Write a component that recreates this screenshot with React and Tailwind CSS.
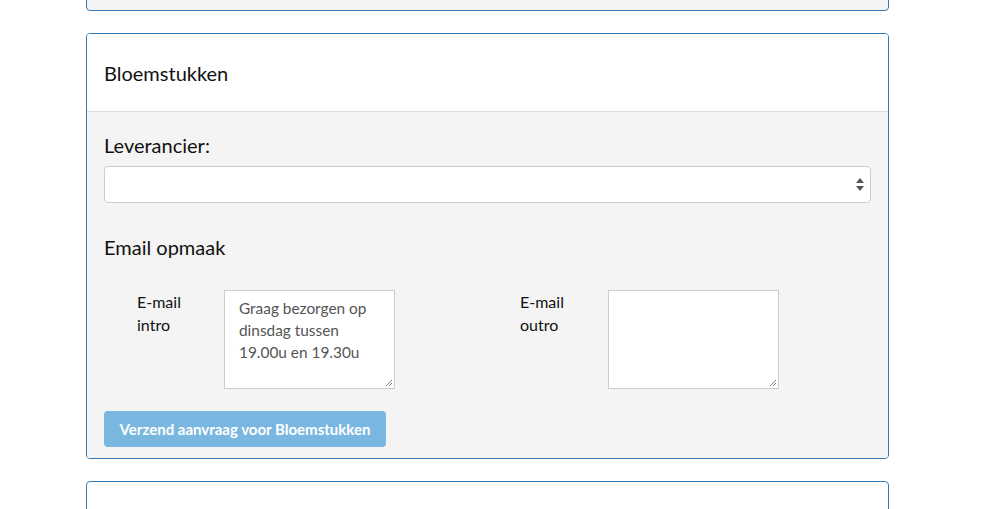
import React from "react";

export default function App() {
  return (
    <div className="w-[982px] h-[509px] overflow-hidden bg-white" style={{ fontFamily: "Lato, 'Open Sans', sans-serif" }}>
      <div className="ml-[86px] w-[803px] flex flex-col gap-[22px] -mt-[30px]">
        <div className="h-[41px] border border-[#337ab7] rounded-[4px] bg-[#f4f4f4]" />
        <div className="border border-[#337ab7] rounded-[4px] overflow-hidden">
          <div className="h-[78px] bg-white border-b border-[#dddddd] flex items-center px-[17px]">
            <h3 className="text-[20px] text-[#111] pt-[1px]">Bloemstukken</h3>
          </div>
          <div className="bg-[#f4f4f4] px-[17px] pt-[20px] pb-[11px]">
            <div className="text-[20px] text-[#111] leading-[26px]">Leverancier:</div>
            <div className="mt-[8px] relative h-[37px] bg-white border border-[#cccccc] rounded-[4px]">
              <svg className="absolute right-[6px] top-[11px]" width="8" height="13" viewBox="0 0 8 13">
                <path d="M4 0 L8 5 L0 5 Z" fill="#555" />
                <path d="M4 13 L8 8 L0 8 Z" fill="#555" />
              </svg>
            </div>
            <div className="mt-[31px] text-[20px] text-[#111] leading-[26px]">Email opmaak</div>
            <div className="mt-[30px] flex">
              <div className="w-[384px] flex pl-[33px]">
                <div className="w-[87px] text-[16px] leading-[23px] text-[#111]">E-mail<br />intro</div>
                <div className="w-[171px] h-[99px] bg-white border border-[#cccccc] px-[14px] py-[6px] text-[15.4px] leading-[22px] text-[#555] relative">
                  Graag bezorgen op dinsdag tussen 19.00u en 19.30u
                  <Grip />
                </div>
              </div>
              <div className="flex pl-[32px]">
                <div className="w-[88px] text-[16px] leading-[23px] text-[#111]">E-mail<br />outro</div>
                <div className="w-[171px] h-[99px] bg-white border border-[#cccccc] relative">
                  <Grip />
                </div>
              </div>
            </div>
            <div className="mt-[22px]">
              <button className="h-[36px] w-[282px] bg-[#7ab7e0] rounded-[4px] text-white font-bold text-[15px]">
                Verzend aanvraag voor Bloemstukken
              </button>
            </div>
          </div>
        </div>
        <div className="h-[60px] border border-[#337ab7] rounded-[4px] bg-white" />
      </div>
    </div>
  );
}

function Grip() {
  return (
    <svg className="absolute right-[1px] bottom-[1px]" width="8" height="8" viewBox="0 0 8 8">
      <path d="M1 7 L7 1 M4 7 L7 4" stroke="#888" strokeWidth="1" />
    </svg>
  );
}
